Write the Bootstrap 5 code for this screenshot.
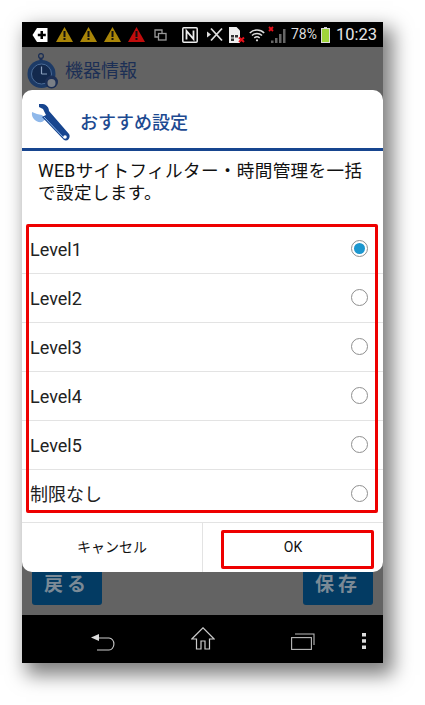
<!DOCTYPE html>
<html lang="ja">
<head>
<meta charset="utf-8">
<title>おすすめ設定</title>
<link href="https://cdn.jsdelivr.net/npm/bootstrap@5.3.0/dist/css/bootstrap.min.css" rel="stylesheet">
<style>
html,body{background:#fff;height:705px;overflow:hidden}
body{font-family:"Roboto","Noto Sans CJK JP",sans-serif;color:#111}
.shell{position:relative;width:361px;height:641px;margin:22px 0 0 22px;box-shadow:7px 9px 18px 3px rgba(0,0,0,.5);background:#636363}
.statusbar{height:25px;background:#000;color:#ddd;padding:0 0 0 10px}
.statusbar svg{display:block;flex:none}
.stat-text{font-size:14px;line-height:25px;color:#ddd}
.stat-clock{font-size:16.5px;line-height:25px;color:#e6e6e6}
.appbody{height:568px;background:#636363}
.apphead{height:43px;padding:4px 0 0 5px;gap:7px}
.apptitle{font-size:18px;color:#1c2f55;line-height:1}
.appfoot{padding:0 10px 10px;height:44px}
.dimbtn{width:70px;height:34px;background:#033b63;border-radius:0 0 3px 3px;color:#7b8a96;font-size:19px;font-weight:700;letter-spacing:4px;line-height:28px;text-align:center}
.navarea{height:48px;background:#000}
.dialog{position:absolute;left:0;top:68px;width:361px;height:482px;background:#fff;border-radius:10px;overflow:hidden}
.dlghead{height:61px;border-bottom:3px solid #17458f;padding:7px 0 0 9px;gap:10px}
.dlgtitle{font-size:18px;font-weight:500;color:#1d4a91;line-height:1}
.dlgtext{font-size:17.6px;line-height:22px;padding:9px 16px 0;height:74px;letter-spacing:.02em}
.optlist{height:298px}
.optrow{height:49px;border-bottom:1px solid #e3e3e3;padding:0 15px 0 8px;font-size:18px;color:#222}
.optrow:last-child{height:53px;padding-bottom:4px}
.radio-off,.radio-on{width:17px;height:17px;border:1px solid #8f8f8f;border-radius:50%;margin-bottom:2px}
.radio-on{padding:2px}
.radio-on span{display:block;width:11px;height:11px;border-radius:50%;background:#1d97cf}
.dlgfoot{height:49px}
.footbtn{font-size:14px;color:#111;line-height:49px;text-align:center}
.footbtn-l{width:180px}
.footbtn-r{width:181px;border-left:1px solid #e3e3e3}
.mark-a{position:absolute;left:4px;top:202px;width:352px;height:289px;border:3px solid #ee0000;border-radius:2px}
.mark-b{position:absolute;left:199px;top:508px;width:153px;height:39px;border:3px solid #ee0000;border-radius:2px}
</style>
</head>
<body>
<div class="shell">
  <div class="statusbar d-flex align-items-center">
    <svg width="16" height="14" viewBox="0 0 16 14"><path d="M5 0h10.500v14H5L.5 7z" fill="#fff"/><path d="M8.500 3h2.500v2.800h2.800v2.500H11v2.800H8.500V8.300H5.800V5.800h2.700z" fill="#000"/></svg>
    <svg style="margin-left:8px" width="17" height="15" viewBox="0 0 17 15"><path d="M8.500 0 17 15H0z" fill="#a98508"/><path d="M7.500 4h2v6h-2zM7.500 11h2v2h-2z" fill="#111"/></svg>
    <svg style="margin-left:7px" width="17" height="15" viewBox="0 0 17 15"><path d="M8.500 0 17 15H0z" fill="#a98508"/><path d="M7.500 4h2v6h-2zM7.500 11h2v2h-2z" fill="#111"/></svg>
    <svg style="margin-left:7px" width="17" height="15" viewBox="0 0 17 15"><path d="M8.500 0 17 15H0z" fill="#a98508"/><path d="M7.500 4h2v6h-2zM7.500 11h2v2h-2z" fill="#111"/></svg>
    <svg style="margin-left:7px" width="17" height="15" viewBox="0 0 17 15"><path d="M8.500 0 17 15H0z" fill="#c00c0c"/><path d="M7.500 4h2v6h-2zM7.500 11h2v2h-2z" fill="#111"/></svg>
    <svg style="margin-left:9px" width="13" height="12" viewBox="0 0 13 12" fill="none" stroke="#999" stroke-width="1.300"><path d="M4 8H1V1h7v3"/><rect x="4.500" y="4.500" width="7.500" height="6.500"/></svg>
    <svg style="margin-left:15px" width="16" height="16" viewBox="0 0 16 16"><rect x=".8" y=".8" width="14.400" height="14.400" rx="1" fill="#000" stroke="#eee" stroke-width="1.500"/><path d="M4.500 12.500V4l7 8V3.500" fill="none" stroke="#eee" stroke-width="1.800"/></svg>
    <svg style="margin-left:9px" width="16" height="15" viewBox="0 0 16 15" fill="none" stroke="#ddd" stroke-width="1.800"><path d="M4 1.500l11 12M15 1.500 4 13.500"/><path d="M0 4.500l4 3-4 3z" fill="#ddd" stroke="none"/></svg>
    <svg style="margin-left:6px" width="16" height="16" viewBox="0 0 16 16"><path d="M0 0h7.500L11 3.500V16H0z" fill="#eee"/><path d="M2 8h3v2.500H2zM6 8h3v2.500H6zM2 11.500h3V14H2z" fill="#333"/><path d="M10 10.500l5 4.500M15 10.500 10 15" stroke="#e8101a" stroke-width="2"/></svg>
    <svg style="margin-left:4px" width="16" height="14" viewBox="0 0 16 14" fill="none" stroke="#ddd" stroke-width="1.500"><path d="M.8 5a10 10 0 0 1 14.400 0M3 7.500a7 7 0 0 1 10 0M5.300 10a4 4 0 0 1 5.400 0"/><circle cx="8" cy="12.300" r="1.100" fill="#ddd" stroke="none"/></svg>
    <svg style="margin-left:3px" width="18" height="18" viewBox="0 0 18 18"><path d="M1 1l4 4M5 1 1 5" stroke="#e8101a" stroke-width="1.800"/><path d="M3 14.500h2.500V17H3zM7 12h2.500v5H7zM11 8h2.500v9H11zM15 3h2.500v14H15z" fill="#666"/></svg>
    <span class="stat-text" style="margin-left:5px">78%</span>
    <svg style="margin-left:4px" width="9" height="16" viewBox="0 0 9 16"><rect x="3" y="0" width="3" height="2" fill="#ccc"/><rect x=".5" y="1.500" width="8" height="14" fill="#9fd43b" stroke="#ddd"/></svg>
    <span class="stat-clock" style="margin-left:6px">10:23</span>
  </div>
  <div class="appbody d-flex flex-column justify-content-between">
    <div class="apphead d-flex align-items-center">
      <svg width="31" height="36" viewBox="0 0 31 36"><circle cx="14" cy="3" r="2.400" fill="none" stroke="#1c2f55" stroke-width="1.300"/><rect x="12.500" y="5" width="3" height="3" fill="#1c2f55"/><circle cx="14.500" cy="21" r="14" fill="#1c3a66"/><circle cx="14.500" cy="21" r="10" fill="#13294d" stroke="#4a6a94"/><path d="M14.500 21V13.500M14.500 21h5.500" stroke="#8aa0bd" stroke-width="1.200"/><circle cx="24.500" cy="29" r="6.500" fill="#1c2f55"/><circle cx="24.500" cy="30" r="4" fill="#7a7f86"/></svg>
      <span class="apptitle">機器情報</span>
    </div>
    <div class="appfoot d-flex justify-content-between align-items-start">
      <div class="dimbtn">戻る</div>
      <div class="dimbtn">保存</div>
    </div>
  </div>
  <div class="navarea position-relative">
    <svg class="position-absolute" style="left:69px;top:18px" width="24" height="19" viewBox="0 0 24 19" fill="none" stroke="#ccc" stroke-width="1.100"><path d="M6 5h12a4.500 5.500 0 0 1 0 12H6"/><path d="M0 4.500 8 1v7z" fill="#ddd" stroke="none"/></svg>
    <svg class="position-absolute" style="left:169px;top:12px" width="24" height="23" viewBox="0 0 24 23" fill="none" stroke="#ccc" stroke-width="1.200"><path d="M.8 12 12 .8 23.200 12H18.500v10h-4.500v-8h-4v8H5.500V12z"/></svg>
    <svg class="position-absolute" style="left:269px;top:18px" width="24" height="17" viewBox="0 0 24 17" fill="none" stroke="#bbb" stroke-width="1.100"><rect x=".6" y="4.600" width="19.800" height="11.800"/><path d="M4 1h19v11"/></svg>
    <svg class="position-absolute" style="left:340px;top:18px" width="4" height="16" viewBox="0 0 4 16" fill="#ddd"><rect width="4" height="3.500"/><rect y="6.200" width="4" height="3.500"/><rect y="12.500" width="4" height="3.500"/></svg>
  </div>
  <div class="dialog d-flex flex-column">
    <div class="dlghead d-flex align-items-center">
      <svg width="39" height="38" viewBox="0 0 39 38"><path d="M1 8c-1 6 4 11 10 10l4-3-4-4-5-1z" fill="#8fb8ea"/><path d="M8 0c5-1 10 2 10 7l20 23c2 3-1 8-5 6L11 13l4-2-3-6-4-2z" fill="#17458f"/><path d="M13 13l20 21" stroke="#8fb8ea" stroke-width="1"/><circle cx="34" cy="33" r="1.800" fill="#fff"/></svg>
      <span class="dlgtitle">おすすめ設定</span>
    </div>
    <div class="dlgtext">WEBサイトフィルター・時間管理を一括で設定します。</div>
    <div class="optlist d-flex flex-column">
      <div class="optrow d-flex align-items-center justify-content-between"><span>Level1</span><span class="radio-on"><span></span></span></div>
      <div class="optrow d-flex align-items-center justify-content-between"><span>Level2</span><span class="radio-off"></span></div>
      <div class="optrow d-flex align-items-center justify-content-between"><span>Level3</span><span class="radio-off"></span></div>
      <div class="optrow d-flex align-items-center justify-content-between"><span>Level4</span><span class="radio-off"></span></div>
      <div class="optrow d-flex align-items-center justify-content-between"><span>Level5</span><span class="radio-off"></span></div>
      <div class="optrow d-flex align-items-center justify-content-between"><span>制限なし</span><span class="radio-off"></span></div>
    </div>
    <div class="dlgfoot d-flex">
      <div class="footbtn footbtn-l">キャンセル</div>
      <div class="footbtn footbtn-r">OK</div>
    </div>
  </div>
  <div class="mark-a"></div>
  <div class="mark-b"></div>
</div>
</body>
</html>
